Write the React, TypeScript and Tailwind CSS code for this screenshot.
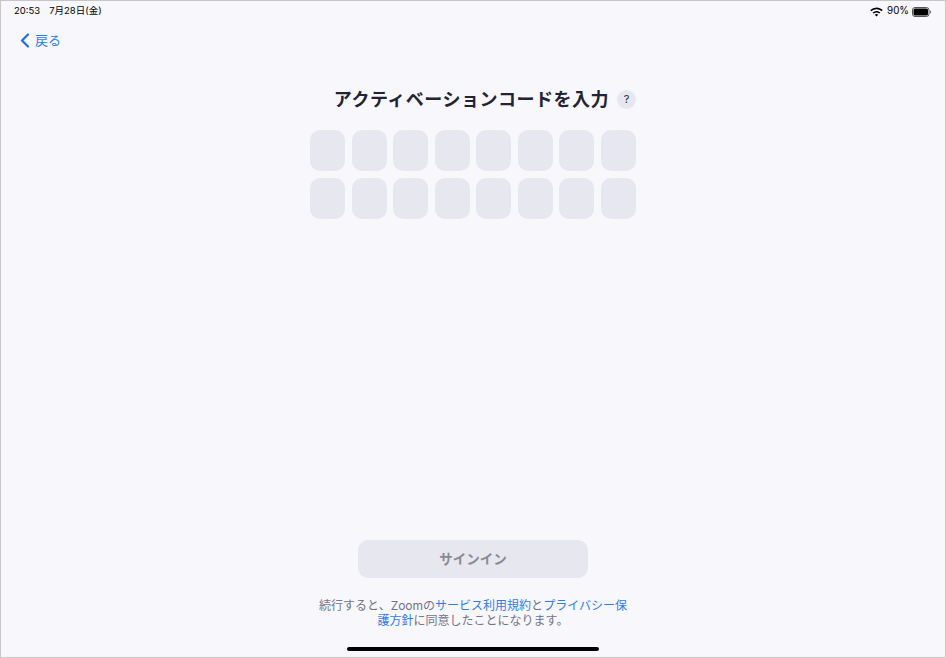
const cjk = '[font-family:Inter,"Noto_Sans_CJK_JP",sans-serif]'

function BatteryIcon() {
  return (
    <svg width="20" height="10" viewBox="0 0 20 10" fill="none">
      <rect x="0.5" y="0.5" width="16.5" height="9" rx="2.5" stroke="#555" strokeWidth="1" />
      <rect x="1.5" y="1.5" width="14.5" height="7" rx="1.5" fill="#000" />
      <path d="M18 3.4c.8.2 1.2.8 1.2 1.6s-.4 1.4-1.2 1.6z" fill="#777" />
    </svg>
  )
}

function WifiIcon() {
  return (
    <svg width="13" height="10" viewBox="0 0 13 10" fill="#000">
      <path d="M6.5 0.6c2.4 0 4.6 1 6.2 2.5l-1.1 1.2A7.4 7.4 0 0 0 6.5 2.3c-2 0-3.8.8-5.1 2L.3 3.1A9 9 0 0 1 6.5.6z" />
      <path d="M6.5 3.9c1.5 0 2.8.6 3.9 1.5L9.2 6.6a4.2 4.2 0 0 0-5.4 0L2.6 5.4a6 6 0 0 1 3.9-1.5z" />
      <path d="M6.5 7c.7 0 1.3.3 1.7.7L6.5 9.6 4.8 7.7c.4-.4 1-.7 1.7-.7z" />
    </svg>
  )
}

export default function App() {
  const cells = Array.from({ length: 16 }, (_, i) => i)

  return (
    <div className={`w-[946px] h-[658px] flex flex-col border border-[#c6c6c8] bg-[#f7f7fc] overflow-hidden ${cjk}`}>
      {/* Status bar */}
      <div className="flex items-center justify-between h-[20px] pt-[1px] pl-[13px] pr-[13px] text-[9.5px] font-normal text-black">
        <div className="flex gap-[9px]">
          <span>20:53</span>
          <span>7月28日(金)</span>
        </div>
        <div className="flex items-center gap-[3px]">
          <WifiIcon />
          <span className="ml-[1px] text-[9.8px]">90%</span>
          <BatteryIcon />
        </div>
      </div>

      {/* Back */}
      <div className="flex items-center gap-[5px] h-[24px] mt-[7px] pl-[19px] text-[#2d7cf0]">
        <svg width="10" height="15" viewBox="0 0 10 15" fill="none">
          <path d="M8 1.5L2 7.5l6 6" stroke="#1f6fe8" strokeWidth="2.2" strokeLinecap="round" strokeLinejoin="round" />
        </svg>
        <span className="text-[13px] leading-none">戻る</span>
      </div>

      {/* Code entry */}
      <div className="flex flex-col items-center mt-[37px]">
        <div className="flex items-center justify-end w-[326px] gap-[8px] h-[20px]">
          <h1 className="pt-[1px] text-[18px] leading-none font-bold text-[#232333] whitespace-nowrap tracking-[0.5px]">
            アクティベーションコードを入力
          </h1>
          <div className="flex items-center justify-center w-[19px] h-[19px] rounded-full bg-[#e7e8ef] text-[11px] font-normal text-[#232333]">
            ?
          </div>
        </div>
        <div className="grid grid-cols-8 gap-x-[6.5px] gap-y-[7px] w-[326px] mt-[21px]">
          {cells.map(i => (
            <div key={i} className="h-[41px] rounded-[10px] bg-[#e7e8ef]" />
          ))}
        </div>
      </div>

      {/* Sign in + terms */}
      <div className="flex-1 flex flex-col items-center justify-end">
        <button className="w-[230px] h-[38px] rounded-[10px] bg-[#e7e8ef] text-[13.5px] font-semibold text-[#8a8a92]">
          サインイン
        </button>
        <p className="w-[316px] mt-[20px] text-center text-[12px] leading-[15px] text-[#747487]">
          続行すると、Zoomの<span className="text-[#2d7cf0]">サービス利用規約</span>と
          <span className="text-[#2d7cf0]">プライバシー保護方針</span>に同意したことになります。
        </p>
        <div className="w-[252px] h-[4px] rounded-full bg-black mt-[19px] mb-[6px]" />
      </div>
    </div>
  )
}
